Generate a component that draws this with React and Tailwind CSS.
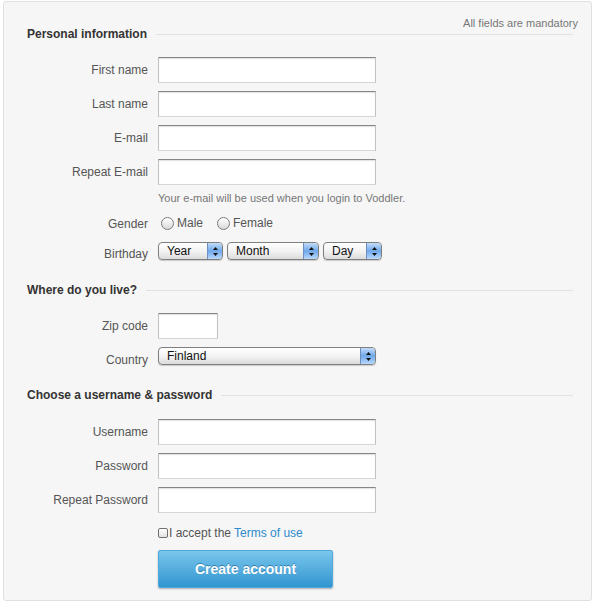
import React from 'react';

function Field({ label, children, labelClass = '' }) {
  return (
    <div className="flex items-center">
      <div className={`w-[144px] text-right text-[12px] leading-[18px] text-[#555] ${labelClass}`}>{label}</div>
      <div className="ml-[10px] flex items-center">{children}</div>
    </div>
  );
}

function TextInput({ className = 'w-[218px]' }) {
  return (
    <div
      className={`h-[26px] ${className} border border-[#c2c2c2] border-t-[#858585] border-b-[#d6d6d6] bg-white shadow-[inset_0_1px_1px_rgba(0,0,0,0.12)]`}
    />
  );
}

function Stepper() {
  return (
    <div className="flex h-full w-[15px] items-center justify-center rounded-r-[3px] border-l border-[#6d8fbf] bg-gradient-to-b from-[#c3dcf8] via-[#6fa8ea] to-[#b9d9fb]">
      <svg width="7" height="11" viewBox="0 0 7 11">
        <path d="M3.5 1 L6 4 L1 4 Z" fill="#111" />
        <path d="M3.5 10 L6 7 L1 7 Z" fill="#111" />
      </svg>
    </div>
  );
}

function MacSelect({ value, className }) {
  return (
    <div
      className={`flex h-[18px] ${className} overflow-hidden rounded-[4px] border border-[#7f7f7f] bg-gradient-to-b from-white via-[#f3f3f3] to-[#dcdcdc] shadow-[0_1px_1px_rgba(0,0,0,0.18)]`}
    >
      <div className="flex-1 pl-[8px] text-[12px] leading-[16px] text-[#111]">{value}</div>
      <Stepper />
    </div>
  );
}

function Radio({ label }) {
  return (
    <div className="flex items-center">
      <span className="h-[13px] w-[13px] rounded-full border border-[#7a7a7a] bg-gradient-to-b from-white to-[#d9d9d9]" />
      <span className="ml-[3px] text-[12px] text-[#555]">{label}</span>
    </div>
  );
}

function SectionHeading({ title }) {
  return (
    <div className="flex h-[14px] items-center pl-[23px] pr-[18px]">
      <h2 className="text-[12px] font-bold leading-[14px] text-[#333]">{title}</h2>
      <div className="ml-[9px] h-px flex-1 bg-[#e2e2e2]" />
    </div>
  );
}

export default function App() {
  return (
    <div className="min-h-screen bg-white pl-[3px] pt-[1px] font-['Liberation_Sans',Arial,sans-serif]">
      <div className="w-[589px] rounded-[3px] border border-[#e0e0e0] bg-[#f6f6f6] pb-[12px] pt-[14px]">
        {/* Personal information */}
        <div className="-mb-[3px] pr-[13px] text-right text-[11px] leading-[14px] text-[#777]">
          All fields are mandatory
        </div>
        <SectionHeading title="Personal information" />

        <div className="mt-[16px] flex flex-col gap-[8px]">
          <Field label="First name"><TextInput /></Field>
          <Field label="Last name"><TextInput /></Field>
          <Field label="E-mail"><TextInput /></Field>
          <Field label="Repeat E-mail"><TextInput /></Field>
        </div>
        <div className="ml-[154px] mt-[6px] text-[11px] leading-[14px] text-[#777]">
          Your e-mail will be used when you login to Voddler.
        </div>

        <div className="mt-[8px] h-[20px]">
          <Field label="Gender" labelClass="translate-y-[1px]">
            <div className="flex h-[20px] items-center pl-[3px]">
              <Radio label="Male" />
              <div className="ml-[14px]"><Radio label="Female" /></div>
            </div>
          </Field>
        </div>

        <div className="mt-[8px] h-[20px]">
          <Field label="Birthday" labelClass="translate-y-[3px]">
            <div className="flex h-[20px] items-center gap-[4px]">
              <MacSelect value="Year" className="w-[65px]" />
              <MacSelect value="Month" className="w-[92px]" />
              <MacSelect value="Day" className="w-[59px]" />
            </div>
          </Field>
        </div>

        {/* Where do you live */}
        <div className="mt-[22px]">
          <SectionHeading title="Where do you live?" />
        </div>
        <div className="mt-[16px] flex flex-col gap-[8px]">
          <Field label="Zip code"><TextInput className="w-[60px]" /></Field>
          <Field label="Country" labelClass="translate-y-[4px]">
            <MacSelect value="Finland" className="w-[218px]" />
          </Field>
        </div>

        {/* Username & password */}
        <div className="mt-[23px]">
          <SectionHeading title="Choose a username & password" />
        </div>
        <div className="mt-[17px] flex flex-col gap-[8px]">
          <Field label="Username"><TextInput /></Field>
          <Field label="Password"><TextInput /></Field>
          <Field label="Repeat Password"><TextInput /></Field>
        </div>

        <div className="ml-[154px] mt-[12px] flex h-[16px] items-center text-[12px] text-[#555]">
          <span className="h-[10px] w-[10px] rounded-[2px] border border-[#6f6f6f] bg-gradient-to-b from-white to-[#e2e2e2]" />
          <span className="ml-[1px]">I accept the </span>
          <a href="#" className="ml-[3px] text-[#2b8bcc]">Terms of use</a>
        </div>

        <div className="ml-[154px] mt-[9px]">
          <button
            type="button"
            className="h-[38px] w-[175px] rounded-[2px] border border-[#4fa9dc] bg-gradient-to-b from-[#78c6ec] to-[#2f95d0] text-[14px] font-bold text-white shadow-[0_1px_2px_rgba(0,0,0,0.3)] [text-shadow:0_-1px_0_rgba(0,60,110,0.45)]"
          >
            Create account
          </button>
        </div>
      </div>
    </div>
  );
}
